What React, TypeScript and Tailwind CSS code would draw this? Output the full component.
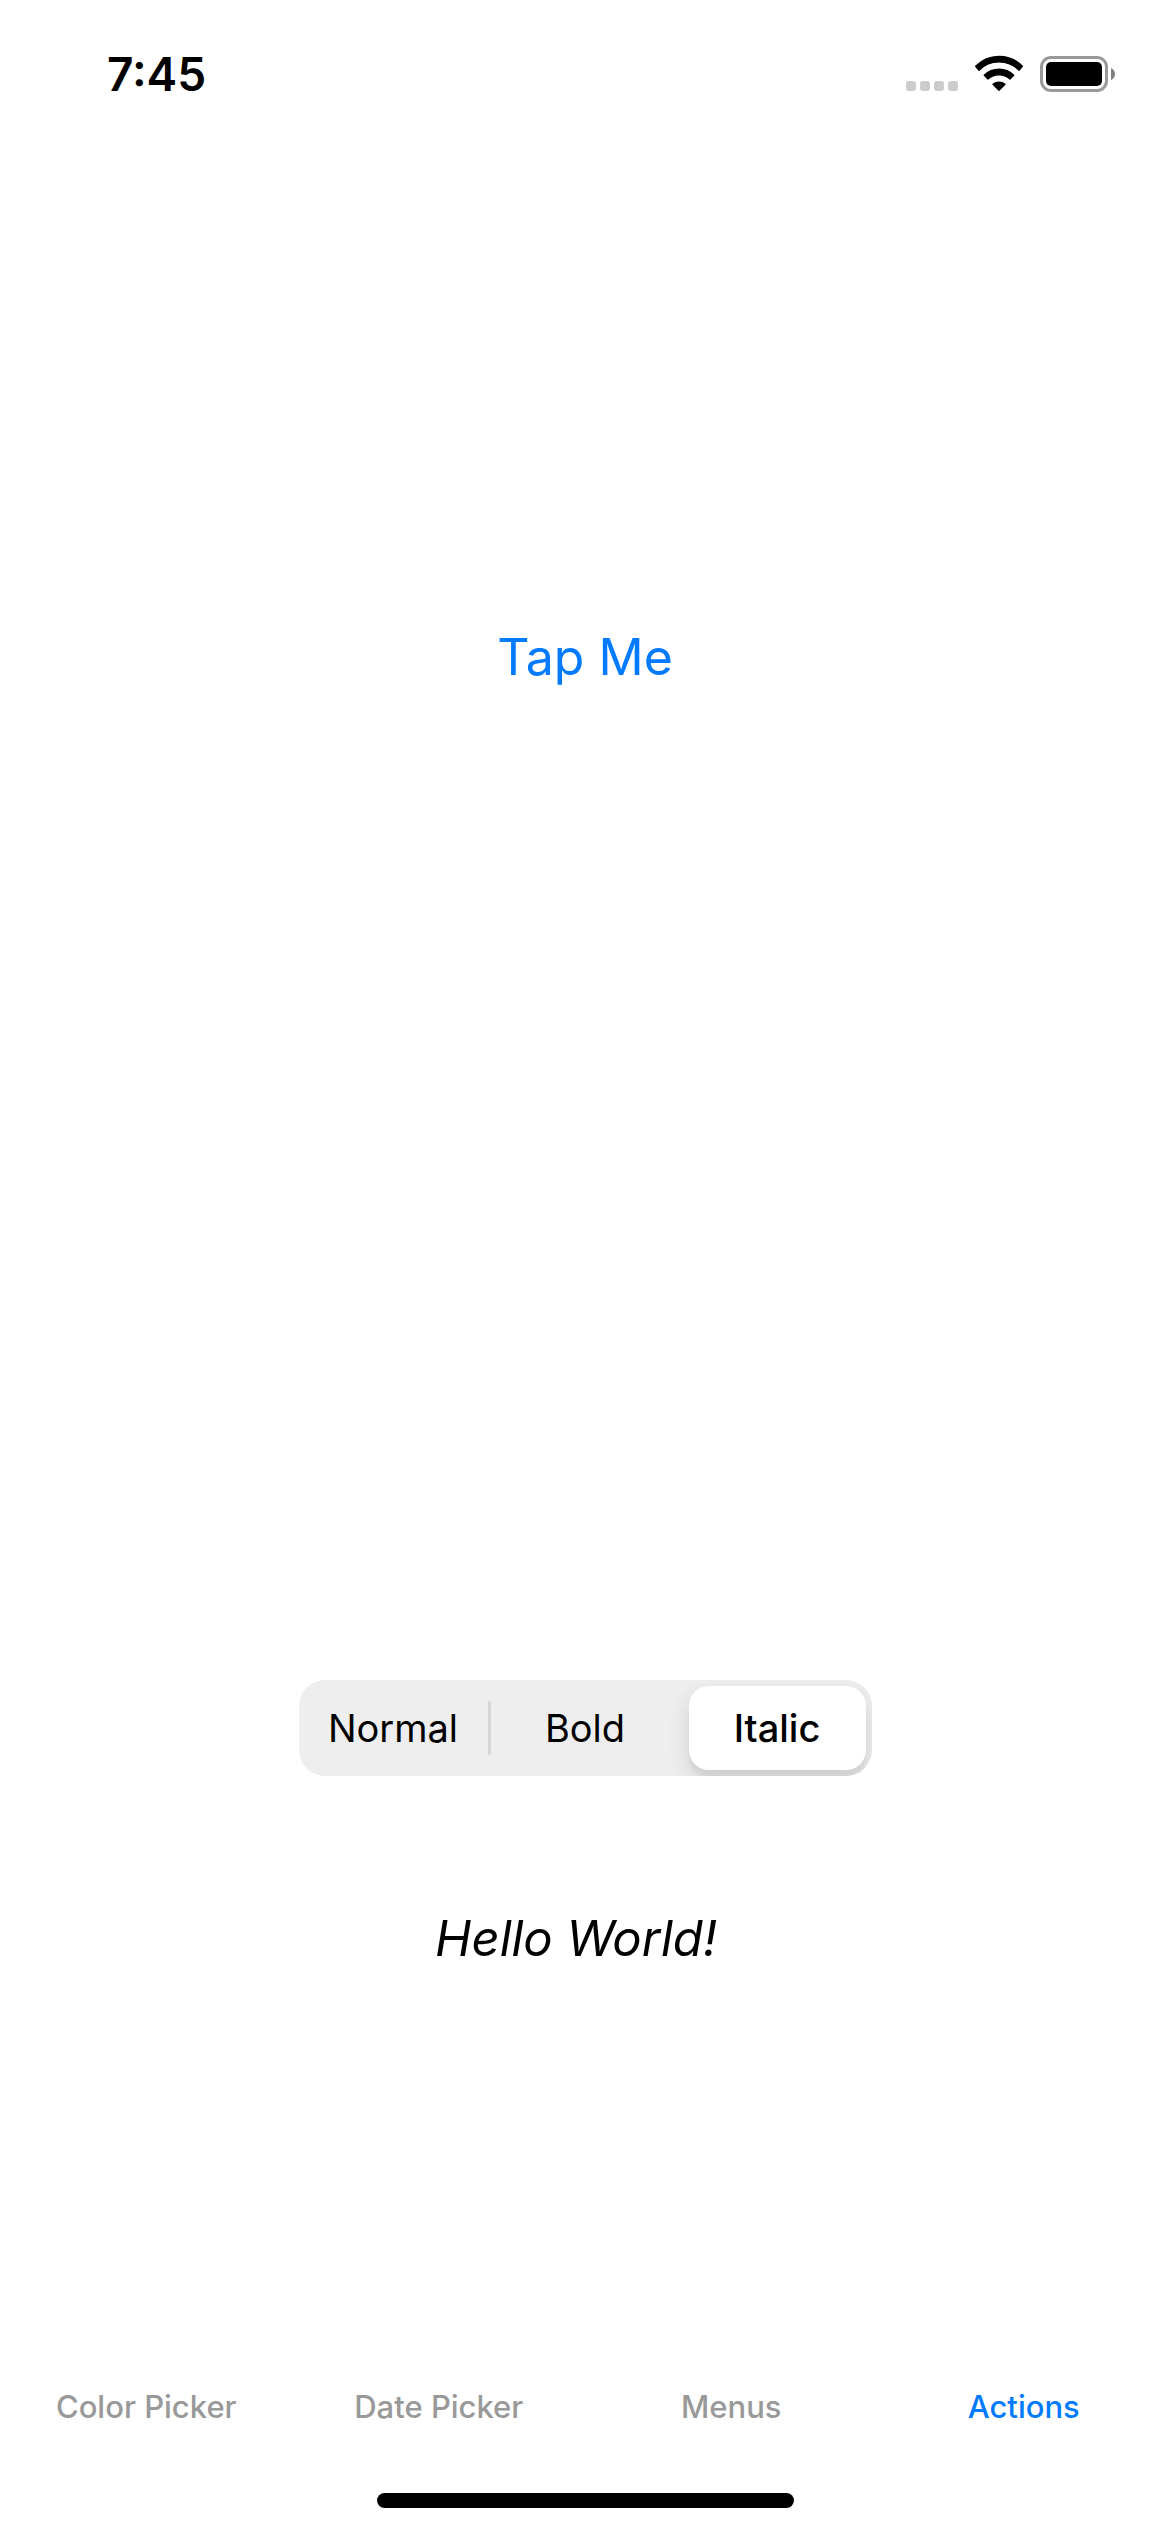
import { useState } from "react";

const styles = ["Normal", "Bold", "Italic"] as const;
type TextStyle = (typeof styles)[number];

const textClasses: Record<TextStyle, string> = {
  Normal: "",
  Bold: "font-bold",
  Italic: "italic",
};

const tabs = ["Color Picker", "Date Picker", "Menus", "Actions"];

function StatusBar() {
  return (
    <header className="flex items-start justify-between pt-[46px] pr-[54px] pl-[107px]">
      <time className="text-[46px] leading-[56px] font-semibold">7:45</time>
      <div className="flex items-end pt-2">
        <div className="mr-4 mb-1 flex gap-1 pb-px" aria-hidden="true">
          <span className="size-2.5 rounded-[3px] bg-[#cccccc]" />
          <span className="size-2.5 rounded-[3px] bg-[#cccccc]" />
          <span className="size-2.5 rounded-[3px] bg-[#cccccc]" />
          <span className="size-2.5 rounded-[3px] bg-[#cccccc]" />
        </div>
        <svg className="mr-4" width="50" height="42" viewBox="0 0 50 42" role="img" aria-label="Wi-Fi">
          <g stroke="black" strokeWidth="1.4" strokeLinejoin="round">
            <path d="M1.7 12.3A32.3 32.3 0 0 1 48.3 12.3L45 16.2A28.2 28.2 0 0 0 5 16.2Z" />
            <path d="M10.3 21.3A20.8 20.8 0 0 1 39.7 21.3L36 24.9A17 17 0 0 0 14 24.9Z" />
            <path d="M19 30.3A9.5 9.5 0 0 1 31 30.3L25 36.3Z" />
          </g>
        </svg>
        <svg width="76" height="42" viewBox="0 0 76 42" role="img" aria-label="Battery full">
          <rect x="1.5" y="3.5" width="65" height="33" rx="9.5" fill="none" stroke="#999999" strokeWidth="3" />
          <rect x="6" y="8" width="56" height="24" rx="5" />
          <path d="M71 14Q75 16 75 20Q75 24 71 26Z" fill="#808080" />
        </svg>
      </div>
    </header>
  );
}

function Segmented({ value, onChange }: { value: TextStyle; onChange: (v: TextStyle) => void }) {
  return (
    <div role="radiogroup" aria-label="Text style" className="flex h-24 items-stretch overflow-hidden rounded-[26px] bg-[#eeeeee]">
      {styles.map((s, i) => {
        const selected = s === value;
        const divided = i > 0 && !selected && styles[i - 1] !== value;
        return (
          <div key={s} className="flex items-center">
            {i > 0 && (
              <span className={divided ? "h-[54px] w-[3px] rounded-full bg-[#d5d5d7]" : "h-[54px] w-[3px]"} />
            )}
            <label className="relative flex h-24 w-[189px] cursor-pointer p-1.5">
              <input
                type="radio"
                name="text-style"
                className="sr-only"
                checked={selected}
                onChange={() => onChange(s)}
              />
              <span
                className={
                  selected
                    ? "flex grow items-center justify-center rounded-[20px] bg-white text-[38px] leading-[48px] font-medium shadow-[0_9px_24px_rgba(0,0,0,0.12),0_9px_3px_rgba(0,0,0,0.04)]"
                    : "flex grow items-center justify-center text-[38px] leading-[48px]"
                }
              >
                {s}
              </span>
            </label>
          </div>
        );
      })}
    </div>
  );
}

export default function App() {
  const [style, setStyle] = useState<TextStyle>("Italic");
  const [tab, setTab] = useState("Actions");
  return (
    <div className="flex min-h-screen flex-col bg-white font-['Inter',sans-serif] text-black">
      <StatusBar />
      <main className="flex grow flex-col items-center pt-[523px]">
        <button type="button" className="text-[50px] leading-[64px] text-[#007aff]">
          Tap Me
        </button>
        <div className="flex flex-col items-center gap-[131px] pt-[991px]">
          <Segmented value={style} onChange={setStyle} />
          <p className="pr-[18px] text-[49px] leading-[64px]">
            <span className={textClasses[style]}>Hello World!</span>
          </p>
        </div>
      </main>
      <nav className="grid grid-cols-4 pb-[66px]">
        {tabs.map((t) => (
          <button
            key={t}
            type="button"
            onClick={() => setTab(t)}
            aria-current={t === tab ? "page" : undefined}
            className={
              t === tab
                ? "text-[31px] leading-[40px] font-medium text-[#007aff]"
                : "text-[31px] leading-[40px] font-medium text-[#999999]"
            }
          >
            {t}
          </button>
        ))}
      </nav>
      <div className="mb-6 h-[15px] w-[417px] self-center rounded-full bg-black" />
    </div>
  );
}
